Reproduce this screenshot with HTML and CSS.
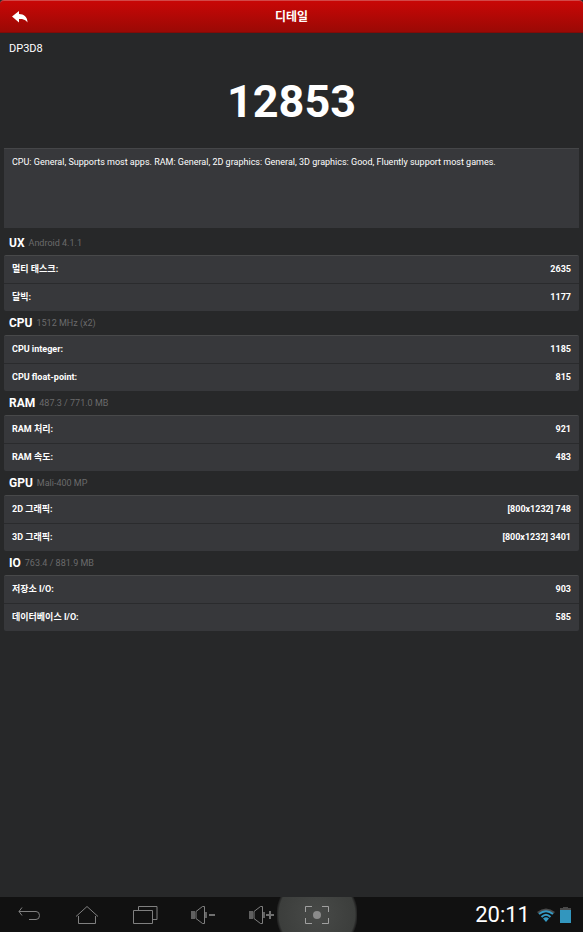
FILE: index.html
```html
<!DOCTYPE html>
<html lang="ko">
<head>
<meta charset="utf-8">
<meta name="viewport" content="width=device-width, initial-scale=1">
<title>디테일</title>
<link rel="stylesheet" href="styles.css">
</head>
<body>
<header class="topbar">
  <button class="back" aria-label="뒤로"><svg width="16" height="12" viewBox="0 0 16 12"><path d="M0 5.500 7 0v3C12 3 15.500 6 15.500 11.500 13.500 8.500 11 8 7 8v3.500z" fill="#fff"/></svg></button>
  <h1 class="title">디테일</h1>
</header>
<main class="content">
  <p class="device">DP3D8</p>
  <p class="score">12853</p>
  <p class="summary">CPU: General, Supports most apps. RAM: General, 2D graphics: General, 3D graphics: Good, Fluently support most games.</p>
  <section>
    <h2 class="heading">UX <small class="note">Android 4.1.1</small></h2>
    <dl class="list">
      <div class="row"><dt>멀티 태스크:</dt><dd>2635</dd></div>
      <div class="row"><dt>달빅:</dt><dd>1177</dd></div>
    </dl>
  </section>
  <section>
    <h2 class="heading">CPU <small class="note">1512 MHz (x2)</small></h2>
    <dl class="list">
      <div class="row"><dt>CPU integer:</dt><dd>1185</dd></div>
      <div class="row"><dt>CPU float-point:</dt><dd>815</dd></div>
    </dl>
  </section>
  <section>
    <h2 class="heading">RAM <small class="note">487.3 / 771.0 MB</small></h2>
    <dl class="list">
      <div class="row"><dt>RAM 처리:</dt><dd>921</dd></div>
      <div class="row"><dt>RAM 속도:</dt><dd>483</dd></div>
    </dl>
  </section>
  <section>
    <h2 class="heading">GPU <small class="note">Mali-400 MP</small></h2>
    <dl class="list">
      <div class="row"><dt>2D 그래픽:</dt><dd>[800x1232] 748</dd></div>
      <div class="row"><dt>3D 그래픽:</dt><dd>[800x1232] 3401</dd></div>
    </dl>
  </section>
  <section>
    <h2 class="heading">IO <small class="note">763.4 / 881.9 MB</small></h2>
    <dl class="list">
      <div class="row"><dt>저장소 I/O:</dt><dd>903</dd></div>
      <div class="row"><dt>데이터베이스 I/O:</dt><dd>585</dd></div>
    </dl>
  </section>
</main>
<nav class="sysbar">
  <button class="key" aria-label="Back"><svg width="26" height="20" viewBox="0 0 26 20"><path d="M6 2.500 3 6.500 6 10.500M3 6.500H20Q23.500 6.500 23.500 10.500T20 14.500H13"/></svg></button>
  <button class="key" aria-label="Home"><svg width="26" height="20" viewBox="0 0 26 20"><path d="M2 11.500 13 1.500 24 11.500M4.500 11V18.500H21.500V11"/></svg></button>
  <button class="key" aria-label="Recent apps"><svg width="26" height="20" viewBox="0 0 26 20"><path d="M1.500 5.500H20.500V18.500H1.500zM6.500 5V1.500H25V14.500H21"/></svg></button>
  <button class="key" aria-label="Volume down"><svg width="26" height="20" viewBox="0 0 26 20"><path class="solid" d="M1 6h4v8H1zM15 7h2v6h-2z"/><path d="M6 6.500 12.500 1.500H14.500V18.500H12.500L6 13.500z"/><path class="thick" d="M19 10H25"/></svg></button>
  <button class="key" aria-label="Volume up"><svg width="26" height="20" viewBox="0 0 26 20"><path class="solid" d="M1 6h4v8H1zM15 7h2v6h-2z"/><path d="M6 6.500 12.500 1.500H14.500V18.500H12.500L6 13.500z"/><path class="thick" d="M18 10h8M22 6v8"/></svg></button>
  <button class="key shot" aria-label="Screenshot"><svg width="26" height="20" viewBox="0 0 26 20"><path d="M8 1.500H1.500V7M18 1.500H24.500V7M1.500 13V18.500H8M24.500 13V18.500H18"/><circle class="dot" cx="13" cy="10" r="4"/></svg></button>
  <div class="status">
    <time class="clock">20:11</time>
    <svg width="20" height="16" viewBox="0 0 20 16" role="img" aria-label="Wi-Fi"><path d="M1 5Q10-2 19 5L17.500 6.500Q10 1 2.500 6.500z" fill="#4a4a4a"/><g fill="none" stroke="#359ac4" stroke-width="2"><path d="M3 7Q10 1.500 17 7M5.500 10Q10 5.500 14.500 10"/></g><path d="M7 11.500Q10 9 13 11.500L10 15z" fill="#359ac4"/></svg>
    <svg width="11" height="16" viewBox="0 0 11 16" role="img" aria-label="Battery"><path d="M3 0h5v1h3v3H0V1h3z" fill="#4a4a4a"/><path d="M0 3h11v13H0z" fill="#3296be"/></svg>
  </div>
</nav>
</body>
</html>
```
FILE: styles.css
```css
* { box-sizing: border-box; }

body {
  margin: 0;
  min-height: 100vh;
  display: flex;
  flex-direction: column;
  background: #272829;
  color: #fff;
  font-family: Roboto, "Noto Sans CJK KR", sans-serif;
}

h1, h2, p, dl, dd { margin: 0; }

button {
  padding: 0;
  border: 0;
  background: none;
  color: inherit;
}

svg { display: block; }

.topbar {
  display: grid;
  grid-template-columns: 40px 1fr 40px;
  align-items: center;
  height: 33px;
  border-top: 1px solid #d24848;
  border-bottom: 1px solid #800b08;
  border-radius: 4px 4px 0 0;
  background: linear-gradient(#c90706, #9a0905);
}

.back { padding-left: 12px; }

.title {
  font-size: 12px;
  line-height: 16px;
  text-align: center;
}

.content {
  flex: 1;
  padding: 9px 4px;
}

.device {
  padding: 0 5px;
  font-size: 11px;
  line-height: 14px;
}

.score {
  padding: 16px 0 17px;
  font-size: 45px;
  font-weight: 700;
  line-height: 59px;
  text-align: center;
}

.summary {
  min-height: 80px;
  margin-bottom: 3px;
  padding: 6px 8px;
  border-top: 1px solid #454648;
  background: #37383b;
  font-size: 9px;
  line-height: 14px;
}

.heading {
  display: flex;
  align-items: center;
  gap: 4px;
  height: 24px;
  padding: 0 5px;
  font-size: 12px;
}

.note {
  color: #6b6b6c;
  font-size: 9px;
  font-weight: 400;
}

.list {
  border-top: 1px solid #48494a;
  border-radius: 2px;
  background: #37383b;
  font-size: 9px;
  font-weight: 700;
}

.row {
  display: flex;
  justify-content: space-between;
  padding: 0 8px;
  line-height: 27px;
}

.row + .row { border-top: 1px solid #2a2b2d; }

.sysbar {
  display: flex;
  height: 35px;
  overflow: hidden;
  background: #111;
}

.key {
  display: flex;
  align-items: center;
  justify-content: center;
  width: 58px;
  fill: none;
  stroke: #808080;
}

.key .solid { fill: #606060; stroke: none; }

.key .thick { stroke: #707070; stroke-width: 2; }

.shot {
  width: 80px;
  margin-left: -13px;
  background: radial-gradient(circle, #484a48 0, #3c3e3c 38px, #222 40px, #111 41px);
  stroke: #a0a0a0;
}

.key .dot { fill: #8b8b8b; stroke: none; }

.status {
  display: flex;
  align-items: center;
  gap: 4px;
  margin-left: auto;
  padding-right: 12px;
}

.clock {
  margin-right: 2px;
  font-size: 22px;
  line-height: 28px;
}
```
